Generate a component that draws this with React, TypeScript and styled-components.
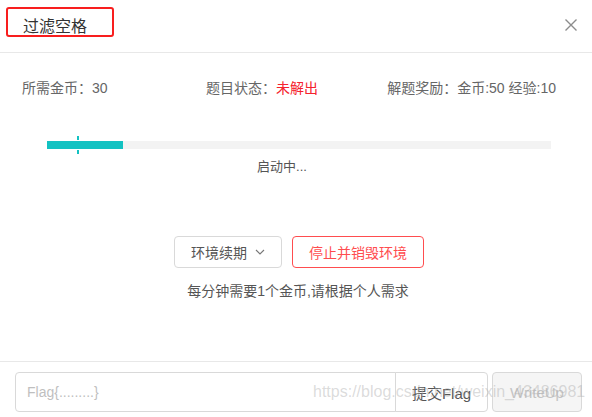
import React from "react";
import styled, { createGlobalStyle } from "styled-components";

const Global = createGlobalStyle`
  html, body { margin: 0; padding: 0; background: #fff; }
  body { font-family: "Liberation Sans", "Noto Sans CJK SC", sans-serif; }
  * { box-sizing: border-box; }
`;

const Dialog = styled.div`
  width: 592px;
  height: 417px;
  background: #fff;
  display: flex;
  flex-direction: column;
  position: relative;
  overflow: hidden;
`;

const Header = styled.div`
  height: 53px;
  border-bottom: 1px solid #e8e8e8;
  display: flex;
  align-items: flex-start;
  justify-content: space-between;
  padding: 7px 14px 0 6px;
`;

const TitleBox = styled.div`
  width: 108px;
  height: 30px;
  border: 2px solid #f81e1e;
  border-radius: 3px;
  padding: 8px 0 0 15px;
  font-size: 16px;
  line-height: 20px;
  color: #333;
  overflow: hidden;
`;

const Close = styled.button`
  border: none;
  background: none;
  padding: 0;
  margin-top: 11px;
  width: 14px;
  height: 14px;
  cursor: pointer;
  display: flex;
`;

const Body = styled.div`
  flex: 1;
  display: flex;
  flex-direction: column;
  padding: 26px 36px 0 22px;
`;

const InfoRow = styled.div`
  display: grid;
  grid-template-columns: 184px 1fr auto;
  font-size: 14px;
  line-height: 18px;
  color: #666;
`;

const Red = styled.span`
  color: #f5222d;
`;

const ProgressWrap = styled.div`
  margin: 44px 5px 0 25px;
  position: relative;
`;

const Track = styled.div`
  height: 8px;
  background: #f3f3f3;
  position: relative;
`;

const Fill = styled.div`
  height: 100%;
  background: #13c2c2;
`;

const Tick = styled.span<{ $top: number }>`
  position: absolute;
  left: 30px;
  top: ${(p) => p.$top}px;
  width: 2px;
  height: 4px;
  background: #13c2c2;
`;

const Status = styled.div`
  text-align: center;
  font-size: 13px;
  color: #555;
  margin-top: 7px;
  padding-right: 14px;
`;

const Actions = styled.div`
  display: flex;
  justify-content: center;
  gap: 10px;
  margin-top: 61px;
  padding-left: 20px;
`;

const Btn = styled.button<{ $danger?: boolean }>`
  height: 32px;
  padding: 0 16px;
  border-radius: 4px;
  background: #fff;
  border: 1px solid ${(p) => (p.$danger ? "#ff4d4f" : "#d9d9d9")};
  color: ${(p) => (p.$danger ? "#ff4d4f" : "#555")};
  font-family: inherit;
  font-size: 14px;
  display: flex;
  align-items: center;
  gap: 8px;
`;

const Hint = styled.div`
  text-align: center;
  font-size: 14px;
  color: #555;
  margin-top: 12px;
  padding-left: 18px;
`;

const Footer = styled.div`
  height: 56px;
  border-top: 1px solid #e8e8e8;
  display: flex;
  align-items: flex-start;
  padding: 10px 10px 0 15px;
  gap: 4px;
`;

const Group = styled.div`
  display: flex;
`;

const Input = styled.input`
  width: 381px;
  height: 40px;
  border: 1px solid #d9d9d9;
  border-radius: 4px 0 0 4px;
  padding: 0 11px;
  font-family: inherit;
  font-size: 14px;
  color: #333;
  outline: none;
  &::placeholder { color: #bfbfbf; }
`;

const SubmitBtn = styled.button`
  width: 93px;
  height: 40px;
  border: 1px solid #d9d9d9;
  border-radius: 0 4px 4px 0;
  margin-left: -1px;
  background: #fff;
  color: #555;
  font-family: inherit;
  font-size: 15px;
`;

const DisabledBtn = styled.button`
  width: 90px;
  height: 40px;
  border: 1px solid #d9d9d9;
  border-radius: 4px;
  background: #f5f5f5;
  color: #c4c4c4;
  font-family: inherit;
  font-size: 15px;
`;

const Watermark = styled.div`
  position: absolute;
  left: 313px;
  top: 383px;
  font-size: 16px;
  color: rgba(175, 175, 175, 0.45);
  pointer-events: none;
  white-space: nowrap;
`;

export default function App() {
  return (
    <>
      <Global />
      <Dialog>
        <Header>
          <TitleBox>过滤空格</TitleBox>
          <Close aria-label="close">
            <svg width="14" height="14" viewBox="0 0 14 14">
              <path d="M1.5 1.5L12.5 12.5M12.5 1.5L1.5 12.5" stroke="#8c8c8c" strokeWidth="1.4" fill="none" />
            </svg>
          </Close>
        </Header>
        <Body>
          <InfoRow>
            <span>所需金币：30</span>
            <span>
              题目状态：<Red>未解出</Red>
            </span>
            <span>解题奖励：金币:50 经验:10</span>
          </InfoRow>
          <ProgressWrap>
            <Track>
              <Fill style={{ width: "15%" }} />
            </Track>
            <Tick $top={-5} />
            <Tick $top={9} />
          </ProgressWrap>
          <Status>启动中...</Status>
          <Actions>
            <Btn>
              环境续期
              <svg width="10" height="6" viewBox="0 0 10 6">
                <path d="M1 1L5 5L9 1" stroke="#777" strokeWidth="1.1" fill="none" />
              </svg>
            </Btn>
            <Btn $danger>停止并销毁环境</Btn>
          </Actions>
          <Hint>每分钟需要1个金币,请根据个人需求</Hint>
        </Body>
        <Footer>
          <Group>
            <Input placeholder="Flag{.........}" />
            <SubmitBtn>提交Flag</SubmitBtn>
          </Group>
          <DisabledBtn disabled>WriteUp</DisabledBtn>
        </Footer>
        <Watermark>https://blog.csdn.net/weixin_43486981</Watermark>
      </Dialog>
    </>
  );
}
